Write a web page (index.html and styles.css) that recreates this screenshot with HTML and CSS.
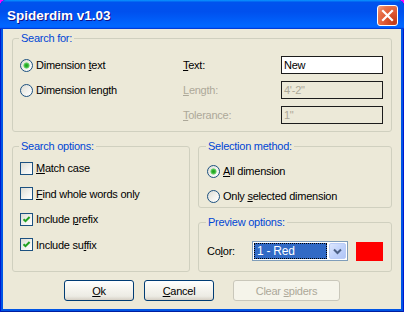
FILE: index.html
```html
<!DOCTYPE html>
<html>
<head>
<meta charset="utf-8">
<title>Spiderdim v1.03</title>
<link rel="stylesheet" href="styles.css">
</head>
<body>
<div class="window">
  <div class="titlebar">
    <span class="title">Spiderdim v1.03</span>
    <span class="close"><svg width="19" height="19" viewBox="0 0 19 19"><path d="M5 5L14 14M14 5L5 14" stroke="#fff" stroke-width="2.2" stroke-linecap="square"/></svg></span>
  </div>
  <div class="client">
    <fieldset class="group g-search">
      <legend>Search for:</legend>
      <div class="search-grid">
        <label class="opt"><span class="radio on"></span><span>Dimension <u>t</u>ext</span></label>
        <span class="flabel"><u>T</u>ext:</span>
        <span class="edit">New</span>
        <label class="opt"><span class="radio"></span><span>Dimension length</span></label>
        <span class="flabel dis"><u>L</u>ength:</span>
        <span class="edit dis">4'-2"</span>
        <span></span>
        <span class="flabel dis"><u>T</u>olerance:</span>
        <span class="edit dis">1"</span>
      </div>
    </fieldset>
    <div class="row2">
      <fieldset class="group g-options">
        <legend>Search options:</legend>
        <div class="checks">
          <label class="opt"><span class="check"></span><span><u>M</u>atch case</span></label>
          <label class="opt"><span class="check"></span><span><u>F</u>ind whole words only</span></label>
          <label class="opt"><span class="check"><svg width="11" height="11" viewBox="0 0 11 11"><path d="M2.5 5.2L4.5 7.2L8.6 3" fill="none" stroke="#21a121" stroke-width="2"/></svg></span><span>Include <u>p</u>refix</span></label>
          <label class="opt"><span class="check"><svg width="11" height="11" viewBox="0 0 11 11"><path d="M2.5 5.2L4.5 7.2L8.6 3" fill="none" stroke="#21a121" stroke-width="2"/></svg></span><span>Include su<u>f</u>fix</span></label>
        </div>
      </fieldset>
      <div class="rightcol">
        <fieldset class="group g-sel">
          <legend>Selection method:</legend>
          <div class="radios">
            <label class="opt"><span class="radio on"></span><span><u>A</u>ll dimension</span></label>
            <label class="opt"><span class="radio"></span><span>Only <u>s</u>elected dimension</span></label>
          </div>
        </fieldset>
        <fieldset class="group g-prev">
          <legend>Preview options:</legend>
          <div class="prev-row">
            <span class="clabel">Co<u>l</u>or:</span>
            <div class="combo">
              <span class="combo-sel">1 - Red</span>
              <span class="combo-btn"><svg width="9" height="7" viewBox="0 0 9 7"><path d="M1 1.5L4.5 5L8 1.5" fill="none" stroke="#4d6185" stroke-width="2"/></svg></span>
            </div>
            <span class="swatch"></span>
          </div>
        </fieldset>
      </div>
    </div>
    <div class="buttons">
      <button class="btn b-ok"><u>O</u>k</button>
      <button class="btn b-cancel"><u>C</u>ancel</button>
      <button class="btn b-clear" disabled>Clear <u>s</u>piders</button>
    </div>
  </div>
</div>
</body>
</html>
```
FILE: styles.css
```css
* { box-sizing: border-box; }
html, body { margin: 0; padding: 0; }
body {
  background: #ff00ff;
  width: 404px;
  height: 312px;
  overflow: hidden;
  font-family: "Liberation Sans", Arial, sans-serif;
  font-size: 11px;
  letter-spacing: -0.25px;
  color: #000;
}
.window {
  width: 404px;
  height: 312px;
  display: flex;
  flex-direction: column;
  border-radius: 6px 6px 0 0;
  overflow: hidden;
  background: #0055e5;
  box-shadow: inset 1px 0 #0019cf, inset -1px 0 #0019cf, inset 0 -1px #001ea0;
}
.titlebar {
  height: 29px;
  flex: none;
  display: flex;
  align-items: center;
  padding: 2px 6px 0 7px;
  background: linear-gradient(180deg, #0997ff, #0053ee 8%, #0050ee 40%, #0066ff 88%, #0066ff 93%, #005bff 95%, #003dd7 96%, #003dd7);
}
.title {
  flex: 1;
  color: #fff;
  font-weight: bold;
  font-size: 13.5px;
  letter-spacing: 0;
  text-shadow: 1px 1px #0f1089;
}
.close {
  width: 21px;
  height: 21px;
  border: 1px solid #fff;
  border-radius: 3px;
  display: flex;
  align-items: center;
  justify-content: center;
  background: radial-gradient(circle at 85% 85%, #c23a16 0%, #e05a35 45%, #e8764f 75%, #f4a88d 100%);
}
.client {
  flex: 1;
  background: #ece9d8;
  margin: 0 3px 3px;
  padding: 3px 9px 0;
  display: flex;
  flex-direction: column;
}
.group {
  margin: 0;
  border: 1px solid #d0d0bf;
  border-radius: 3px;
  min-width: 0;
}
.group legend {
  color: #0046d5;
  padding: 0 2px;
  line-height: 13px;
}
.g-search { padding: 11px 8px 7px 7px; }
.g-search legend { margin-left: -1px; }
.search-grid {
  display: grid;
  grid-template-columns: 163px 98px 102px;
  grid-auto-rows: 18px;
  row-gap: 7px;
  align-items: center;
}
.opt {
  display: flex;
  align-items: center;
  gap: 3px;
  white-space: nowrap;
}
.radio {
  flex: none;
  width: 13px;
  height: 13px;
  border-radius: 50%;
  border: 1px solid #1c5180;
  background: linear-gradient(135deg, #dcdcd4, #f4f4f0 60%, #fff);
}
.radio.on {
  background: radial-gradient(circle, #1f9d1f 0, #2fb42f 1.6px, #7ad67a 2.8px, rgba(255,255,255,0) 3.4px), linear-gradient(135deg, #dcdcd4, #f4f4f0 60%, #fff);
}
.check {
  flex: none;
  width: 13px;
  height: 13px;
  border: 1px solid #1c5180;
  background: linear-gradient(135deg, #dcdcd4, #f4f4f0 60%, #fff);
  display: flex;
  align-items: center;
  justify-content: center;
}
.flabel.dis, .edit.dis { color: #aca899; }
.edit {
  height: 18px;
  border: 1px solid #1c1c1c;
  background: #fff;
  padding: 0 2px;
  line-height: 16px;
  white-space: nowrap;
}
.edit.dis { background: #ece9d8; }
.row2 {
  margin-top: 8px;
  display: grid;
  grid-template-columns: 178px 1fr;
  column-gap: 8px;
}
.g-options { padding: 6px 7px 0 7px; }
.g-options legend { margin-left: -1px; }
.checks {
  display: grid;
  grid-auto-rows: 18px;
  row-gap: 7.67px;
  align-items: center;
}
.rightcol {
  display: flex;
  flex-direction: column;
  gap: 8px;
}
.g-sel { padding: 9px 8px 2px 8px; }
.g-sel legend, .g-prev legend { margin-left: -1px; }
.radios {
  display: grid;
  grid-auto-rows: 18px;
  row-gap: 7px;
  align-items: center;
}
.g-prev { padding: 12px 8px 10px 8px; }
.prev-row {
  display: flex;
  align-items: center;
  height: 20px;
}
.clabel { width: 45px; }
.combo {
  width: 96px;
  height: 20px;
  border: 1px solid #7f9db9;
  background: #fff;
  display: flex;
  align-items: center;
  padding: 1px;
  gap: 2px;
}
.combo-sel {
  flex: 1;
  height: 16px;
  background: #316ac5;
  color: #fff;
  border: 1px dotted #000;
  line-height: 14px;
  padding-left: 2px;
  font-size: 12px;
}
.combo-btn {
  width: 17px;
  height: 16px;
  border: 1px solid #b9ccf7;
  border-radius: 2px;
  background: linear-gradient(135deg, #dce6fd, #c1d3fb 50%, #b1c6f6);
  display: flex;
  align-items: center;
  justify-content: center;
}
.swatch {
  width: 27px;
  height: 19px;
  margin-left: 8px;
  background: #ff0000;
}
.buttons {
  margin-top: 8px;
  display: flex;
  justify-content: center;
}
.btn {
  height: 21px;
  margin: 0;
  padding: 0;
  font-family: inherit;
  font-size: 11px;
  letter-spacing: -0.25px;
  color: #000;
  border: 1px solid #003c74;
  border-radius: 3px;
  background: linear-gradient(180deg, #ffffff 0%, #f6f5ef 40%, #ecebe4 80%, #d6d0c5 100%);
}
.b-ok { width: 70px; }
.b-cancel { width: 70px; margin-left: 10px; }
.b-clear {
  width: 107px;
  margin-left: 19px;
  color: #aca899;
  border-color: #c9c7ba;
  background: #f5f4ea;
}
```
